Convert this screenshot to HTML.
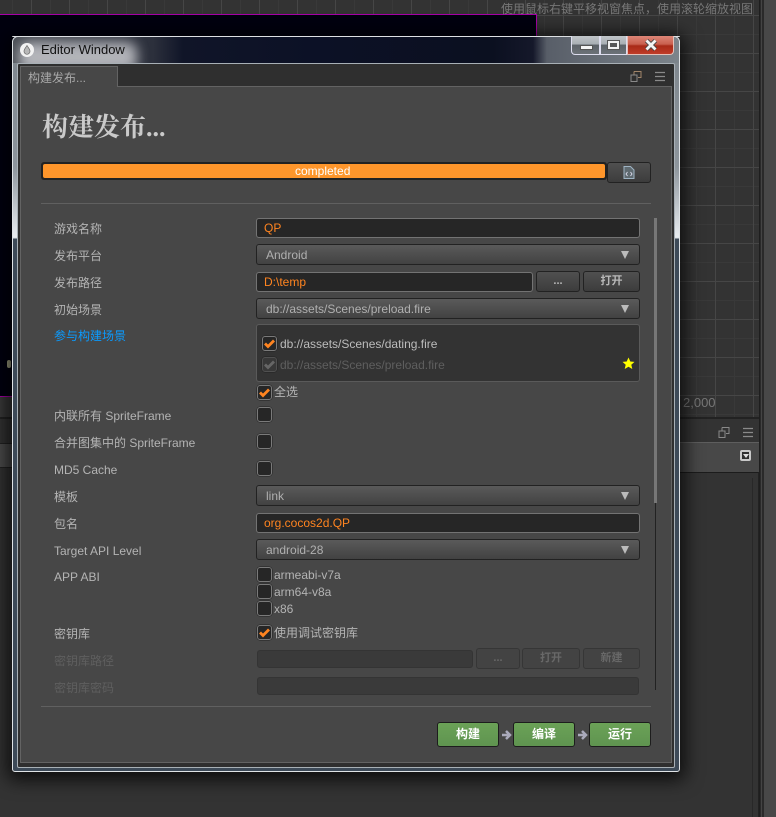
<!DOCTYPE html>
<html><head><meta charset="utf-8">
<style>
*{box-sizing:border-box}
html,body{margin:0;padding:0;width:776px;height:817px;overflow:hidden;background:#333}
body{position:relative;font:12px "Liberation Sans","Noto Sans CJK SC",sans-serif;color:#b4b4b4}
div,span,svg{position:absolute}
.l{left:54px;height:16px;line-height:16px;white-space:nowrap;color:#b4b4b4}
.d{color:#5f5f5f}
.sel{left:256px;width:384px;height:21px;background:linear-gradient(#5a5a5a,#424242);border:1px solid #222;border-radius:3px;line-height:20px;padding-left:9px;color:#b0b0b0}
.sel:after{content:"";position:absolute;right:10px;top:6px;border-left:4.5px solid transparent;border-right:4.5px solid transparent;border-top:8px solid #bbb}
.inp{left:256px;height:20px;background:#262626;border:1px solid #737373;border-radius:3px;line-height:18px;padding-left:7px;color:#ff8420}
.btn{height:21px;background:linear-gradient(#505050,#3c3c3c);border:1px solid #222;border-radius:3px;text-align:center;line-height:19px;font-size:11px;font-weight:bold;color:#b8b8b8}
.dis{background:#434343;border-color:#363636;color:#686868}
.dinp{left:257px;height:18px;background:#3a3a3a;border:1px solid #343434;border-radius:3px}
.cb{width:15px;height:15px;background:#262626;border:1px solid #7a7a7a;border-radius:3px;box-shadow:0 0 0 .5px #222}
.t{height:16px;line-height:16px;white-space:nowrap}
.g{top:722px;height:25px;background:linear-gradient(#6ba257,#5f9450);border:1px solid #1d1d1d;border-radius:3px;text-align:center;line-height:23px;font-weight:bold;color:#fff}
.hr{left:41px;width:610px;height:1px;background:#606060}
</style></head><body>

<!-- editor background -->
<div style="left:0;top:0;width:760px;height:418px;background-color:#333;background-image:linear-gradient(90deg,#464646 1px,transparent 1px),linear-gradient(#464646 1px,transparent 1px),linear-gradient(90deg,#393939 1px,transparent 1px),linear-gradient(#393939 1px,transparent 1px);background-size:38px 38px,38px 38px,19px 19px,19px 19px;background-position:31px 0,0 15px,12px 0,0 -4px"></div>
<div style="left:0;top:14px;width:537px;height:383px;background:#01010f;border-top:1px solid #a800a8;border-right:1px solid #a800a8;border-bottom:0"></div>
<div style="left:0;top:396px;width:14px;height:1px;background:#a800a8"></div>
<div style="left:0;top:397px;width:14px;height:20px;background:#3a3a3a"></div>
<div style="left:7px;top:360px;width:4px;height:8px;background:#a8a888;border-radius:2px"></div>
<div style="left:501px;top:1px;width:256px;line-height:16px;color:#777;white-space:nowrap">使用鼠标右键平移视窗焦点，使用滚轮缩放视图</div>
<div style="left:683px;top:395px;line-height:16px;color:#777;font-size:13px">2,000</div>
<div style="left:0;top:417px;width:760px;height:2px;background:#222"></div>
<div style="left:0;top:419px;width:776px;height:398px;background:#333"></div>
<div style="left:0;top:443px;width:12px;height:25px;background:#4c4c4c;border-top:1px solid #222;border-bottom:1px solid #222"></div>
<div style="left:680px;top:442px;width:80px;height:31px;background:#484848;border-top:1px solid #5e5e5e"></div>
<div style="left:680px;top:472px;width:79px;height:345px;background:#333;border-top:1px solid #1c1c1c;border-right:1px solid #222"></div>
<div style="left:752px;top:478px;width:1px;height:339px;background:#282828"></div>
<div style="left:759px;top:0;width:5px;height:817px;background:#2a2a2a;border-left:1px solid #1e1e1e"></div>
<div style="left:761px;top:0;width:1px;height:817px;background:#444"></div>
<div style="left:764px;top:0;width:12px;height:817px;background:#484848"></div>
<svg style="left:718px;top:427px" width="36" height="12" viewBox="0 0 36 12"><path d="M4 .5h7v6h-3M4 .5v3M1 4h6v6.500H1z" fill="none" stroke="#8a8a8a"/><path d="M25 1.500h10M25 5.500h10M25 9.500h10" stroke="#8a8a8a" stroke-width="1.300"/></svg>
<div style="left:740px;top:450px;width:11px;height:11px;background:#2d2d2d;border:2px solid #c8c8c8;border-radius:2px"></div>
<div style="left:743px;top:454px;border-left:3px solid transparent;border-right:3px solid transparent;border-top:4px solid #ddd"></div>

<!-- window -->
<div style="left:12px;top:36px;width:668px;height:736px;border-radius:6px 6px 3px 3px;background:linear-gradient(#7c848b 0,#8d959c 130px,#e8ecf0 200px,#d8dde2 201px,#3d4a58 202px,#3d4a58 100%);box-shadow:0 3px 18px 5px rgba(0,0,0,.75);border:1px solid #dfe3e6"></div>
<!-- title bar glass -->
<div style="left:13px;top:37px;width:666px;height:26px;border-radius:5px 5px 0 0;overflow:hidden;background:linear-gradient(90deg,#4a4e55 0,#2c303c 140px,#101528 170px,#0c1126 300px,#0b1020 480px,#15182a 520px,#585e68 534px,#7c848b 100%)"><div style="left:6px;top:5px;width:118px;height:30px;background:#c0c1c6;filter:blur(6px);border-radius:10px;opacity:.9"></div></div>
<div style="left:12px;top:36px;width:668px;height:1px;background:#dde0e3;border-radius:6px 6px 0 0"></div>
<div style="left:20px;top:43px;width:14px;height:14px;border-radius:50%;background:#f2f2f2"></div>
<svg style="left:20px;top:43px" width="14" height="14" viewBox="0 0 14 14"><path d="M7 2.500C8.500 5 10 6.300 10 8.300a3 3 0 0 1-6 0C4 6.300 5.500 5 7 2.500z" fill="#b8b8b8" stroke="#666" stroke-width=".7"/></svg>
<div style="left:41px;top:41px;line-height:17px;font-size:13px;color:#111;white-space:nowrap">Editor Window</div>

<!-- caption buttons -->
<div style="left:571px;top:36px;width:29px;height:19px;background:linear-gradient(#c0c5c9 0,#a8aeb3 45%,#5c6268 50%,#6c7278 100%);border:1px solid #dde;border-top:0;border-radius:0 0 0 4px"></div>
<div style="left:581px;top:46px;width:11px;height:3px;background:#f4f4f4;box-shadow:0 0 0 1px #555"></div>
<div style="left:600px;top:36px;width:27px;height:19px;background:linear-gradient(#c0c5c9 0,#a8aeb3 45%,#5c6268 50%,#6c7278 100%);border:1px solid #dde;border-top:0"></div>
<div style="left:608px;top:41px;width:11px;height:8px;background:#555;border:2px solid #f0f0f0;box-shadow:0 0 0 1px #555"></div>
<div style="left:627px;top:36px;width:47px;height:19px;background:linear-gradient(#dd8678 0,#c9604f 45%,#a82a18 55%,#c03c28 100%);border:1px solid #e5c0b8;border-top:0;border-radius:0 0 4px 0"></div>
<svg style="left:644px;top:39px" width="14" height="12" viewBox="0 0 14 12"><path d="M2.500 1.500l9 9M11.500 1.500l-9 9" stroke="#444" stroke-width="4.500"/><path d="M2.500 1.500l9 9M11.500 1.500l-9 9" stroke="#f4f4f4" stroke-width="2.800"/></svg>

<!-- client -->
<div style="left:17px;top:63px;width:658px;height:705px;background:#2f2f2f;border:1px solid #a8b0b6;border-radius:2px"></div>
<div style="left:20px;top:86px;width:652px;height:677px;background:#474747;border:1px solid #636363"></div>
<div style="left:20px;top:66px;width:98px;height:21px;background:#474747;border:1px solid #636363;border-bottom:0;color:#a8a8a8;line-height:22px;padding-left:7px">构建发布...</div>
<svg style="left:630px;top:71px" width="36" height="12" viewBox="0 0 36 12"><path d="M4 .5h7v6h-3M4 .5v3" fill="none" stroke="#a08468"/><path d="M1 4h6v6.500H1z" fill="none" stroke="#8a8a8a"/><path d="M25 1.500h10M25 5.500h10M25 9.500h10" stroke="#8a8a8a" stroke-width="1.300"/></svg>

<div style="left:42px;top:111px;font:bold 26px/34px 'Liberation Serif','Noto Serif CJK SC',serif;color:#cacaca;white-space:nowrap">构建发布...</div>

<!-- progress -->
<div style="left:41px;top:162px;width:566px;height:18px;background:#222;border-radius:3px"></div>
<div style="left:43px;top:164px;width:562px;height:14px;background:#ff962b;border-radius:2px;line-height:14px;color:#fff;font-size:12px;white-space:nowrap"><span style="left:252px;top:0">completed</span></div>
<div class="btn" style="left:607px;top:162px;width:44px"></div>
<svg style="left:623px;top:166px" width="12" height="13" viewBox="0 0 12 13"><path d="M1 .5h6.500L11 4v8.500H1z" fill="#5f6a70" stroke="#9fb4c4"/><path d="M4.500 6L3 8l1.500 2M7.500 6L9 8l-1.500 2" fill="none" stroke="#dde" stroke-width=".9"/></svg>
<div class="hr" style="top:203px"></div>

<!-- labels -->
<div class="l" style="top:221px">游戏名称</div>
<div class="l" style="top:248px">发布平台</div>
<div class="l" style="top:275px">发布路径</div>
<div class="l" style="top:302px">初始场景</div>
<div class="l" style="top:328px;color:#0a9bff">参与构建场景</div>
<div class="l" style="top:408px">内联所有 SpriteFrame</div>
<div class="l" style="top:435px">合并图集中的 SpriteFrame</div>
<div class="l" style="top:462px">MD5 Cache</div>
<div class="l" style="top:489px">模板</div>
<div class="l" style="top:516px">包名</div>
<div class="l" style="top:543px">Target API Level</div>
<div class="l" style="top:569px">APP ABI</div>
<div class="l" style="top:626px">密钥库</div>
<div class="l d" style="top:653px">密钥库路径</div>
<div class="l d" style="top:680px">密钥库密码</div>

<!-- controls -->
<div class="inp" style="top:218px;width:384px">QP</div>
<div class="sel" style="top:244px">Android</div>
<div class="inp" style="top:272px;width:277px">D:\temp</div>
<div class="btn" style="left:536px;top:271px;width:44px">...</div>
<div class="btn" style="left:583px;top:271px;width:57px">打开</div>
<div class="sel" style="top:298px">db://assets/Scenes/preload.fire</div>

<div style="left:256px;top:324px;width:384px;height:58px;background:#333;border:1px solid #5a5a5a;border-radius:3px"></div>
<div class="cb" style="left:262px;top:336px"></div>
<svg style="left:262px;top:336px" width="15" height="15" viewBox="0 0 15 15"><path d="M3 7.500l3 3 6-6" fill="none" stroke="#ff8420" stroke-width="2.800"/></svg>
<div class="t" style="left:280px;top:336px;color:#bcbcbc">db://assets/Scenes/dating.fire</div>
<div class="cb" style="left:262px;top:357px;background:#383838;border-color:#505050"></div>
<svg style="left:262px;top:357px" width="15" height="15" viewBox="0 0 15 15"><path d="M3 7.500l3 3 6-6" fill="none" stroke="#666" stroke-width="2.800"/></svg>
<div class="t" style="left:280px;top:357px;color:#5f5f5f">db://assets/Scenes/preload.fire</div>
<svg style="left:622px;top:357px" width="13" height="13" viewBox="0 0 13 13"><path d="M6.500.5l1.800 4 4.200.4-3.200 2.800 1 4.300-3.800-2.300-3.800 2.300 1-4.300L.5 4.900l4.200-.4z" fill="#ff0"/></svg>

<div class="cb" style="left:257px;top:385px"></div>
<svg style="left:257px;top:385px" width="15" height="15" viewBox="0 0 15 15"><path d="M3 7.500l3 3 6-6" fill="none" stroke="#ff8420" stroke-width="2.800"/></svg>
<div class="t" style="left:274px;top:384px">全选</div>

<div class="cb" style="left:257px;top:407px"></div>
<div class="cb" style="left:257px;top:434px"></div>
<div class="cb" style="left:257px;top:461px"></div>

<div class="sel" style="top:485px">link</div>
<div class="inp" style="top:513px;width:384px">org.cocos2d.QP</div>
<div class="sel" style="top:539px">android-28</div>

<div class="cb" style="left:257px;top:567px"></div>
<div class="t" style="left:274px;top:567px">armeabi-v7a</div>
<div class="cb" style="left:257px;top:584px"></div>
<div class="t" style="left:274px;top:584px">arm64-v8a</div>
<div class="cb" style="left:257px;top:601px"></div>
<div class="t" style="left:274px;top:601px">x86</div>

<div class="cb" style="left:257px;top:625px"></div>
<svg style="left:257px;top:625px" width="15" height="15" viewBox="0 0 15 15"><path d="M3 7.500l3 3 6-6" fill="none" stroke="#ff8420" stroke-width="2.800"/></svg>
<div class="t" style="left:274px;top:625px">使用调试密钥库</div>

<div class="dinp" style="top:650px;width:216px"></div>
<div class="btn dis" style="left:476px;top:648px;width:44px">...</div>
<div class="btn dis" style="left:522px;top:648px;width:58px">打开</div>
<div class="btn dis" style="left:583px;top:648px;width:57px">新建</div>
<div class="dinp" style="top:677px;width:382px"></div>

<!-- scrollbar -->
<div style="left:655px;top:503px;width:1px;height:187px;background:#222"></div>
<div style="left:654px;top:218px;width:3px;height:285px;background:#777"></div>

<div class="hr" style="top:706px"></div>

<!-- footer -->
<div class="g" style="left:437px;width:62px">构建</div>
<div class="g" style="left:513px;width:62px">编译</div>
<div class="g" style="left:589px;width:62px">运行</div>
<svg style="left:501px;top:729px" width="11" height="12" viewBox="0 0 11 12"><path d="M1 6h7M5 2l4 4-4 4" fill="none" stroke="#aab" stroke-width="2.500"/></svg>
<svg style="left:577px;top:729px" width="11" height="12" viewBox="0 0 11 12"><path d="M1 6h7M5 2l4 4-4 4" fill="none" stroke="#aab" stroke-width="2.500"/></svg>
</body></html>
